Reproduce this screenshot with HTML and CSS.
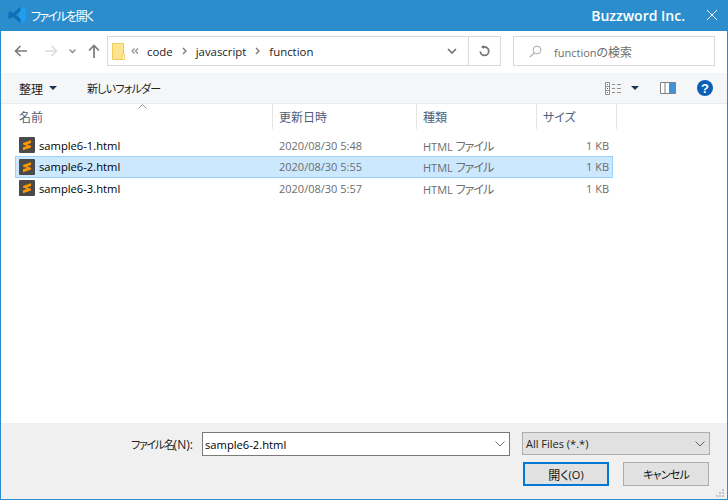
FILE: index.html
```html
<!DOCTYPE html>
<html lang="ja">
<head>
    <meta charset="UTF-8">
    <title>ファイルを開く</title>
    <link rel="stylesheet" href="styles.css">
</head>
<body>
<div class="dialog">
    <!-- Title bar -->
    <div class="titlebar">
        <svg class="app-icon" width="18" height="18" viewBox="0 0 18 18">
            <path d="M11 0.5 L17.5 2.5 V15.5 L11 17.5 Z" fill="#1e9df1"/>
            <path d="M12.5 0.5 L5 7.2 L1.8 5 L0.5 5.8 V12.2 L1.8 13 L5 10.8 L12.5 17.5 V12.8 L7.6 9 L12.5 5.2 Z" fill="#0f6fb8"/>
        </svg>
        <span class="jp title">ファイルを開く</span>
        <span class="brand">Buzzword Inc.</span>
        <svg class="close" width="12" height="12" viewBox="0 0 12 12">
            <path d="M1 1 L11 11 M11 1 L1 11" stroke="#fff" stroke-width="1" fill="none"/>
        </svg>
    </div>

    <!-- Navigation -->
    <div class="nav">
        <svg class="nav-btn" width="14" height="12" viewBox="0 0 14 12">
            <path d="M13 6 H2 M6.5 1 L1.5 6 L6.5 11" stroke="#7a7a7a" stroke-width="1.6" fill="none"/>
        </svg>
        <svg class="nav-btn forward" width="14" height="12" viewBox="0 0 14 12">
            <path d="M1 6 H12 M7.5 1 L12.5 6 L7.5 11" stroke="#dcdcdc" stroke-width="1.6" fill="none"/>
        </svg>
        <svg class="nav-drop" width="7" height="5" viewBox="0 0 7 5">
            <path d="M0.5 0.5 L3.5 3.5 L6.5 0.5" stroke="#8a8a8a" stroke-width="1.4" fill="none"/>
        </svg>
        <svg class="nav-up" width="12" height="14" viewBox="0 0 12 14">
            <path d="M6 14 V2 M1 6.5 L6 1.5 L11 6.5" stroke="#7a7a7a" stroke-width="1.7" fill="none"/>
        </svg>
        <div class="address">
            <svg class="folder" width="13" height="17" viewBox="0 0 13 17">
                <path d="M0.5 0.5 H11.5 V16.5 H0.5 Z" fill="#fde58f" stroke="#eccb5f"/>
                <path d="M10 11 H12.5 V16.5 H10 Z" fill="#fff3c4" stroke="#eccb5f" stroke-width="0.8"/>
            </svg>
            <svg class="crumb-more" width="8" height="6" viewBox="0 0 8 6">
                <path d="M3.5 0.5 L1 3 L3.5 5.5 M7 0.5 L4.5 3 L7 5.5" stroke="#888" stroke-width="1.1" fill="none"/>
            </svg>
            <span class="crumb">code</span>
            <svg class="crumb-sep" width="5" height="8" viewBox="0 0 5 8">
                <path d="M1 1 L4 4 L1 7" stroke="#808080" stroke-width="1.5" fill="none"/>
            </svg>
            <span class="crumb">javascript</span>
            <svg class="crumb-sep" width="5" height="8" viewBox="0 0 5 8">
                <path d="M1 1 L4 4 L1 7" stroke="#808080" stroke-width="1.5" fill="none"/>
            </svg>
            <span class="crumb">function</span>
            <svg class="addr-drop" width="10" height="6" viewBox="0 0 10 6">
                <path d="M1 1 L5 5 L9 1" stroke="#707070" stroke-width="1.6" fill="none"/>
            </svg>
            <div class="refresh">
                <svg width="11" height="12" viewBox="0 0 11 12">
                    <path d="M3 2 H5.5 A4.2 4.2 0 1 1 1.3 6.5" stroke="#777" stroke-width="1.8" fill="none"/>
                    <path d="M4.8 0 V4 L2 2 Z" fill="#777"/>
                </svg>
            </div>
        </div>
        <div class="search">
            <svg width="13" height="13" viewBox="0 0 13 13">
                <circle cx="8" cy="5" r="3.9" stroke="#a9a9a9" fill="none"/>
                <path d="M5.2 7.8 L0.8 12.2" stroke="#c39a8f" stroke-width="1.1"/>
            </svg>
            <span>function<span class="jp">の検索</span></span>
        </div>
    </div>

    <!-- Toolbar -->
    <div class="toolbar">
        <span class="jp tool">整理</span>
        <span class="caret"></span>
        <span class="jp kana tool new-folder">新しいフォルダー</span>
        <svg class="view-icon" width="16" height="13" viewBox="0 0 16 13">
            <path d="M0.5 0.5 H4.5 V12.5 H0.5 Z M0.5 4.5 H4.5 M0.5 8.5 H4.5" stroke="#8f8f8f" fill="#fff"/>
            <path d="M7 2.5 H10 M12 2.5 H16 M7 6.5 H10 M12 6.5 H16 M7 10.5 H10 M12 10.5 H16" stroke="#8f8f8f"/>
            <path d="M2 2 H3 V3 H2 Z M2 6 H3 V7 H2 Z M2 10 H3 V11 H2 Z" fill="#c04040"/>
        </svg>
        <span class="caret view-caret"></span>
        <svg class="pane-icon" width="16" height="12" viewBox="0 0 16 12">
            <path d="M0.5 0.5 H15.5 V11.5 H0.5 Z" fill="#fff" stroke="#808080"/>
            <path d="M5 0 V12" stroke="#808080"/>
            <path d="M9 1 H15 V11 H9 Z" fill="#3f92dc"/>
        </svg>
        <svg class="help-icon" width="16" height="16" viewBox="0 0 16 16">
            <circle cx="8" cy="8" r="8" fill="#0a5fb4"/>
            <text x="8" y="12.5" class="help-mark">?</text>
        </svg>
    </div>

    <!-- File list -->
    <div class="list">
        <div class="list-head">
            <div class="jp head-cell name-cell">名前
                <svg class="sort" width="9" height="5" viewBox="0 0 9 5">
                    <path d="M0.5 4.5 L4.5 0.5 L8.5 4.5" stroke="#9a9a9a" fill="none"/>
                </svg>
            </div>
            <div class="jp head-cell">更新日時</div>
            <div class="jp head-cell">種類</div>
            <div class="jp head-cell">サイズ</div>
        </div>
        <div class="rows">
            <div class="row">
                <div class="file"><svg class="file-icon" width="16" height="16" viewBox="0 0 16 16"><use href="#sublime"/></svg>sample6-1.html</div>
                <div>2020/08/30 5:48</div>
                <div>HTML <span class="jp file-type">ファイル</span></div>
                <div class="size">1 KB</div>
            </div>
            <div class="row selected">
                <div class="file"><svg class="file-icon" width="16" height="16" viewBox="0 0 16 16"><use href="#sublime"/></svg>sample6-2.html</div>
                <div>2020/08/30 5:55</div>
                <div>HTML <span class="jp file-type">ファイル</span></div>
                <div class="size">1 KB</div>
            </div>
            <div class="row">
                <div class="file"><svg class="file-icon" width="16" height="16" viewBox="0 0 16 16"><use href="#sublime"/></svg>sample6-3.html</div>
                <div>2020/08/30 5:57</div>
                <div>HTML <span class="jp file-type">ファイル</span></div>
                <div class="size">1 KB</div>
            </div>
        </div>
    </div>

    <!-- Bottom panel -->
    <div class="footer">
        <div class="footer-line">
            <label class="file-label"><span class="jp kana label-kana">ファイル名</span>(N):</label>
            <div class="name-input">
                <span>sample6-2.html</span>
                <svg width="10" height="6" viewBox="0 0 10 6"><path d="M0.5 0.5 L5 5 L9.5 0.5" stroke="#707070" fill="none"/></svg>
            </div>
            <div class="filter">
                <span>All Files (*.*)</span>
                <svg width="10" height="6" viewBox="0 0 10 6"><path d="M0.5 0.5 L5 5 L9.5 0.5" stroke="#606060" fill="none"/></svg>
            </div>
        </div>
        <div class="buttons">
            <div class="btn primary"><span class="jp">開く</span>(O)</div>
            <div class="btn"><span class="jp kana">キャンセル</span></div>
        </div>
        <svg class="grip" width="8" height="8" viewBox="0 0 8 8">
            <path d="M6 0 H8 V2 H6 Z M3 3 H5 V5 H3 Z M6 3 H8 V5 H6 Z M0 6 H2 V8 H0 Z M3 6 H5 V8 H3 Z M6 6 H8 V8 H6 Z" fill="#c4c4c4"/>
        </svg>
    </div>
</div>

<svg width="0" height="0" class="defs">
    <symbol id="sublime" viewBox="0 0 16 16">
        <rect width="16" height="16" rx="1" fill="#4a4a4a"/>
        <path d="M4 6 L12 3.2 V6 L7.9 7.4 L12 8.8 V10.6 L4 13.2 V10.3 L8.1 8.9 L4 7.6 Z" fill="#ff9800"/>
    </symbol>
</svg>
</body>
</html>
```

FILE: styles.css
```css
* {
    box-sizing: border-box;
}

body {
    margin: 0;
    background: #fff;
    font-family: "Open Sans", "Noto Sans CJK JP", sans-serif;
    font-size: 11px;
    color: #000;
}

.jp {
    font-family: "Noto Sans CJK JP", sans-serif;
    font-size: 12px;
    font-feature-settings: "palt";
}

.kana {
    font-size: 11px;
    letter-spacing: -0.8px;
}

.dialog {
    position: relative;
    width: 728px;
    height: 500px;
    display: flex;
    flex-direction: column;
    border: 1px solid #2b8dcc;
    border-top: 0;
    overflow: hidden;
}

.defs {
    position: absolute;
}

/* title bar */
.titlebar {
    height: 31px;
    margin: 0 -1px;
    flex: none;
    display: flex;
    align-items: center;
    background: #2b8dcc;
    color: #fff;
    padding: 0 10px 1px 8px;
}

.app-icon {
    margin-right: 5px;
}

.title {
    letter-spacing: -1.6px;
}

.brand {
    margin-left: auto;
    font-size: 14px;
    font-weight: 600;
}

.close {
    margin-left: 21px;
}

/* navigation */
.nav {
    height: 42px;
    flex: none;
    display: flex;
    align-items: center;
    padding: 0 0 2px 13px;
}

.nav-btn.forward {
    margin-left: 16px;
}

.nav-drop {
    margin-left: 11px;
}

.nav-up {
    margin-left: 12px;
}

.address {
    width: 394px;
    height: 30px;
    margin-left: 7px;
    display: flex;
    align-items: center;
    border: 1px solid #d9d9d9;
    padding-left: 4px;
    color: #222;
}

.folder {
    margin-right: 6px;
}

.crumb {
    font-size: 11.4px;
}

.crumb-more {
    margin-right: 8px;
}

.crumb-sep {
    margin: 0 9px;
}

.addr-drop {
    margin-left: auto;
    margin-right: 11px;
}

.refresh {
    width: 32px;
    height: 28px;
    display: flex;
    align-items: center;
    justify-content: center;
    border-left: 1px solid #d9d9d9;
}

.search {
    width: 202px;
    height: 30px;
    margin-left: 12px;
    display: flex;
    align-items: center;
    gap: 12px;
    padding-left: 15px;
    border: 1px solid #d9d9d9;
    color: #6d6d6d;
}

/* toolbar */
.toolbar {
    height: 31px;
    flex: none;
    display: flex;
    align-items: center;
    background: #f5f6f7;
    border-bottom: 1px solid #e9eaeb;
    padding-left: 18px;
}

.tool {
    color: #222;
}

.caret {
    width: 0;
    height: 0;
    margin-left: 6px;
    border: 4px solid transparent;
    border-top: 4px solid #1d3557;
    border-bottom: 0;
}

.new-folder {
    margin-left: 30px;
}

.view-icon {
    margin-left: auto;
}

.view-caret {
    margin-left: 10px;
}

.pane-icon {
    margin-left: 21px;
}

.help-icon {
    margin: 0 14px 0 21px;
}

.help-mark {
    fill: #fff;
    font-family: "Liberation Sans", sans-serif;
    font-size: 13px;
    font-weight: 700;
    text-anchor: middle;
}

/* list */
.list {
    flex: 1;
    background: #fff;
}

.list-head {
    display: grid;
    grid-template-columns: 272px 144px 120px 80px;
    height: 25px;
    color: #4c607a;
}

.head-cell {
    position: relative;
    display: flex;
    align-items: center;
    padding-left: 6px;
    border-right: 1px solid #e5e5e5;
}

.name-cell {
    padding-left: 18px;
}

.sort {
    position: absolute;
    left: 137px;
    top: 0;
}

.rows {
    padding: 6px 0 0 14px;
}

.row {
    width: 598px;
    height: 21px;
    display: grid;
    grid-template-columns: 263px 144px 120px 1fr;
    align-items: center;
    border: 1px solid transparent;
    padding-bottom: 1px;
    color: #6d6d6d;
}

.row.selected {
    height: 22px;
    background: #cce8ff;
    border-color: #99d1ff;
}

.file {
    display: flex;
    align-items: center;
    gap: 4px;
    padding-left: 3px;
    font-size: 11.2px;
    color: #000;
}

.file-type {
    letter-spacing: -1px;
}

.size {
    text-align: right;
    padding-right: 3px;
}

/* bottom panel */
.footer {
    position: relative;
    height: 76px;
    flex: none;
    background: #f0f0f0;
    padding-top: 9px;
}

.footer-line {
    display: flex;
    align-items: flex-start;
    padding-left: 130px;
}

.file-label {
    width: 71px;
    height: 24px;
    line-height: 24px;
    white-space: nowrap;
    font-size: 12px;
    color: #222;
}

.label-kana {
    letter-spacing: -1.3px;
}

.name-input {
    width: 308px;
    height: 24px;
    display: flex;
    align-items: center;
    justify-content: space-between;
    padding: 0 4px 0 2px;
    background: #fff;
    border: 1px solid #7a7a7a;
    font-size: 11.2px;
}

.filter {
    width: 188px;
    height: 23px;
    margin-left: 12px;
    display: flex;
    align-items: center;
    justify-content: space-between;
    padding: 0 4px 0 3px;
    background: #e1e1e1;
    border: 1px solid #adadad;
    color: #222;
}

.buttons {
    display: flex;
    gap: 14px;
    margin: 6px 0 0 522px;
}

.btn {
    width: 86px;
    height: 24px;
    display: flex;
    align-items: center;
    justify-content: center;
    background: #e1e1e1;
    border: 1px solid #adadad;
    color: #111;
}

.btn.primary {
    border: 2px solid #0078d7;
}

.grip {
    position: absolute;
    right: 3px;
    bottom: 2px;
}
```
